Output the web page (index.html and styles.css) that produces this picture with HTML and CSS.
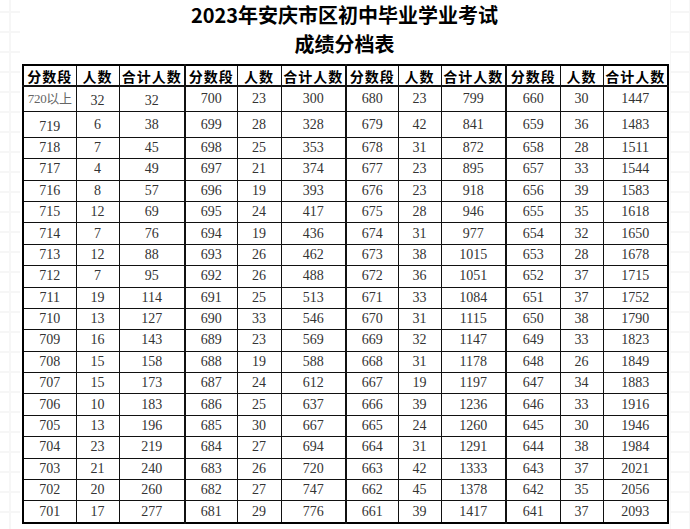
FILE: index.html
```html
<!DOCTYPE html>
<html lang="zh">
<head>
<meta charset="utf-8">
<link rel="stylesheet" href="styles.css">
</head>
<body>
<div class="page">
  <h1 class="title">2023年安庆市区初中毕业学业考试</h1>
  <h2 class="subtitle">成绩分档表</h2>
  <table class="scores">
    <colgroup>
      <col class="c1"><col class="c2"><col class="c3">
      <col class="c4"><col class="c5"><col class="c6">
      <col class="c7"><col class="c8"><col class="c9">
      <col class="c10"><col class="c11"><col class="c12">
    </colgroup>
    <thead>
      <tr>
        <th>分数段</th><th>人数</th><th class="g">合计人数</th>
        <th>分数段</th><th>人数</th><th class="g">合计人数</th>
        <th>分数段</th><th>人数</th><th class="g">合计人数</th>
        <th>分数段</th><th>人数</th><th>合计人数</th>
      </tr>
    </thead>
    <tbody>
      <tr><td class="lite">720以上</td><td class="low">32</td><td class="g low">32</td><td>700</td><td>23</td><td class="g">300</td><td>680</td><td>23</td><td class="g">799</td><td>660</td><td>30</td><td>1447</td></tr>
      <tr><td class="low">719</td><td>6</td><td class="g">38</td><td>699</td><td>28</td><td class="g">328</td><td>679</td><td>42</td><td class="g">841</td><td>659</td><td>36</td><td>1483</td></tr>
      <tr><td>718</td><td>7</td><td class="g">45</td><td>698</td><td>25</td><td class="g">353</td><td>678</td><td>31</td><td class="g">872</td><td>658</td><td>28</td><td>1511</td></tr>
      <tr><td>717</td><td>4</td><td class="g">49</td><td>697</td><td>21</td><td class="g">374</td><td>677</td><td>23</td><td class="g">895</td><td>657</td><td>33</td><td>1544</td></tr>
      <tr><td>716</td><td>8</td><td class="g">57</td><td>696</td><td>19</td><td class="g">393</td><td>676</td><td>23</td><td class="g">918</td><td>656</td><td>39</td><td>1583</td></tr>
      <tr><td>715</td><td>12</td><td class="g">69</td><td>695</td><td>24</td><td class="g">417</td><td>675</td><td>28</td><td class="g">946</td><td>655</td><td>35</td><td>1618</td></tr>
      <tr><td>714</td><td>7</td><td class="g">76</td><td>694</td><td>19</td><td class="g">436</td><td>674</td><td>31</td><td class="g">977</td><td>654</td><td>32</td><td>1650</td></tr>
      <tr><td>713</td><td>12</td><td class="g">88</td><td>693</td><td>26</td><td class="g">462</td><td>673</td><td>38</td><td class="g">1015</td><td>653</td><td>28</td><td>1678</td></tr>
      <tr><td>712</td><td>7</td><td class="g">95</td><td>692</td><td>26</td><td class="g">488</td><td>672</td><td>36</td><td class="g">1051</td><td>652</td><td>37</td><td>1715</td></tr>
      <tr><td>711</td><td>19</td><td class="g">114</td><td>691</td><td>25</td><td class="g">513</td><td>671</td><td>33</td><td class="g">1084</td><td>651</td><td>37</td><td>1752</td></tr>
      <tr><td>710</td><td>13</td><td class="g">127</td><td>690</td><td>33</td><td class="g">546</td><td>670</td><td>31</td><td class="g">1115</td><td>650</td><td>38</td><td>1790</td></tr>
      <tr><td>709</td><td>16</td><td class="g">143</td><td>689</td><td>23</td><td class="g">569</td><td>669</td><td>32</td><td class="g">1147</td><td>649</td><td>33</td><td>1823</td></tr>
      <tr><td>708</td><td>15</td><td class="g">158</td><td>688</td><td>19</td><td class="g">588</td><td>668</td><td>31</td><td class="g">1178</td><td>648</td><td>26</td><td>1849</td></tr>
      <tr><td>707</td><td>15</td><td class="g">173</td><td>687</td><td>24</td><td class="g">612</td><td>667</td><td>19</td><td class="g">1197</td><td>647</td><td>34</td><td>1883</td></tr>
      <tr><td>706</td><td>10</td><td class="g">183</td><td>686</td><td>25</td><td class="g">637</td><td>666</td><td>39</td><td class="g">1236</td><td>646</td><td>33</td><td>1916</td></tr>
      <tr><td>705</td><td>13</td><td class="g">196</td><td>685</td><td>30</td><td class="g">667</td><td>665</td><td>24</td><td class="g">1260</td><td>645</td><td>30</td><td>1946</td></tr>
      <tr><td>704</td><td>23</td><td class="g">219</td><td>684</td><td>27</td><td class="g">694</td><td>664</td><td>31</td><td class="g">1291</td><td>644</td><td>38</td><td>1984</td></tr>
      <tr><td>703</td><td>21</td><td class="g">240</td><td>683</td><td>26</td><td class="g">720</td><td>663</td><td>42</td><td class="g">1333</td><td>643</td><td>37</td><td>2021</td></tr>
      <tr><td>702</td><td>20</td><td class="g">260</td><td>682</td><td>27</td><td class="g">747</td><td>662</td><td>45</td><td class="g">1378</td><td>642</td><td>35</td><td>2056</td></tr>
      <tr><td>701</td><td>17</td><td class="g">277</td><td>681</td><td>29</td><td class="g">776</td><td>661</td><td>39</td><td class="g">1417</td><td>641</td><td>37</td><td>2093</td></tr>
    </tbody>
  </table>
  <div class="rule"></div>
</div>
</body>
</html>
```
FILE: styles.css
```css
html, body {
  margin: 0;
  padding: 0;
}
body {
  width: 690px;
  height: 529px;
  overflow: hidden;
  background-color: #ffffff;
  background-image:
    linear-gradient(to right, #f6f6f6 0, #f6f6f6 2px, transparent 2px),
    linear-gradient(to bottom, #f6f6f6 0, #f6f6f6 2px, transparent 2px);
  background-size: 20px 20px;
  background-position: 9px 11px;
}
.page {
  margin: 0 20px 0 20px;
  padding: 1px 0 0 2px;
  width: 648px;
  height: 528px;
  background: #ffffff;
  display: flex;
  flex-direction: column;
  align-items: flex-start;
}
.title {
  margin: 0;
  width: 645px;
  text-align: center;
  font-family: "Noto Sans CJK SC", "Noto Sans", sans-serif;
  font-weight: 700;
  font-size: 20px;
  line-height: 28px;
  height: 28px;
  color: #000;
}
.subtitle {
  margin: 1px 0 0 0;
  width: 645px;
  text-align: center;
  font-family: "Noto Sans CJK SC", "Noto Sans", sans-serif;
  font-weight: 700;
  font-size: 20px;
  line-height: 27px;
  height: 27px;
  color: #000;
}
.scores {
  margin-top: 7px;
  border-collapse: collapse;
  table-layout: fixed;
  width: 645px;
  border: 2px solid #000;
}
.c1 { width: 53px; }
.c2 { width: 43px; }
.c3 { width: 66px; }
.c4 { width: 52px; }
.c5 { width: 44px; }
.c6 { width: 65px; }
.c7 { width: 52px; }
.c8 { width: 43px; }
.c9 { width: 65px; }
.c10 { width: 54px; }
.c11 { width: 43px; }
.c12 { width: 65px; }
.scores th,
.scores td {
  border: 1px solid #111;
  padding: 0;
  text-align: center;
  white-space: nowrap;
  overflow: hidden;
}
.scores th {
  height: 19px;
  font-family: "Noto Sans CJK SC", "Noto Sans", sans-serif;
  font-weight: 700;
  font-size: 14px;
  line-height: 18px;
  letter-spacing: 1px;
  color: #000;
  border-bottom-width: 2px;
}
.scores td {
  height: 20.4px;
  font-family: "Liberation Serif", "Noto Serif CJK SC", "Noto Sans CJK SC", serif;
  font-size: 14px;
  line-height: 18px;
  color: #333;
}
.scores .g {
  border-right-width: 2px;
}
.scores td.lite {
  color: #666;
  font-size: 13px;
  letter-spacing: -0.3px;
  font-family: "Liberation Serif", "Noto Sans CJK SC", serif;
}
.scores td.low {
  padding-top: 4px;
  line-height: 14px;
}
.rule {
  margin-top: 5px;
  width: 644px;
  height: 0;
  border-top: 1px solid #666;
}
```
